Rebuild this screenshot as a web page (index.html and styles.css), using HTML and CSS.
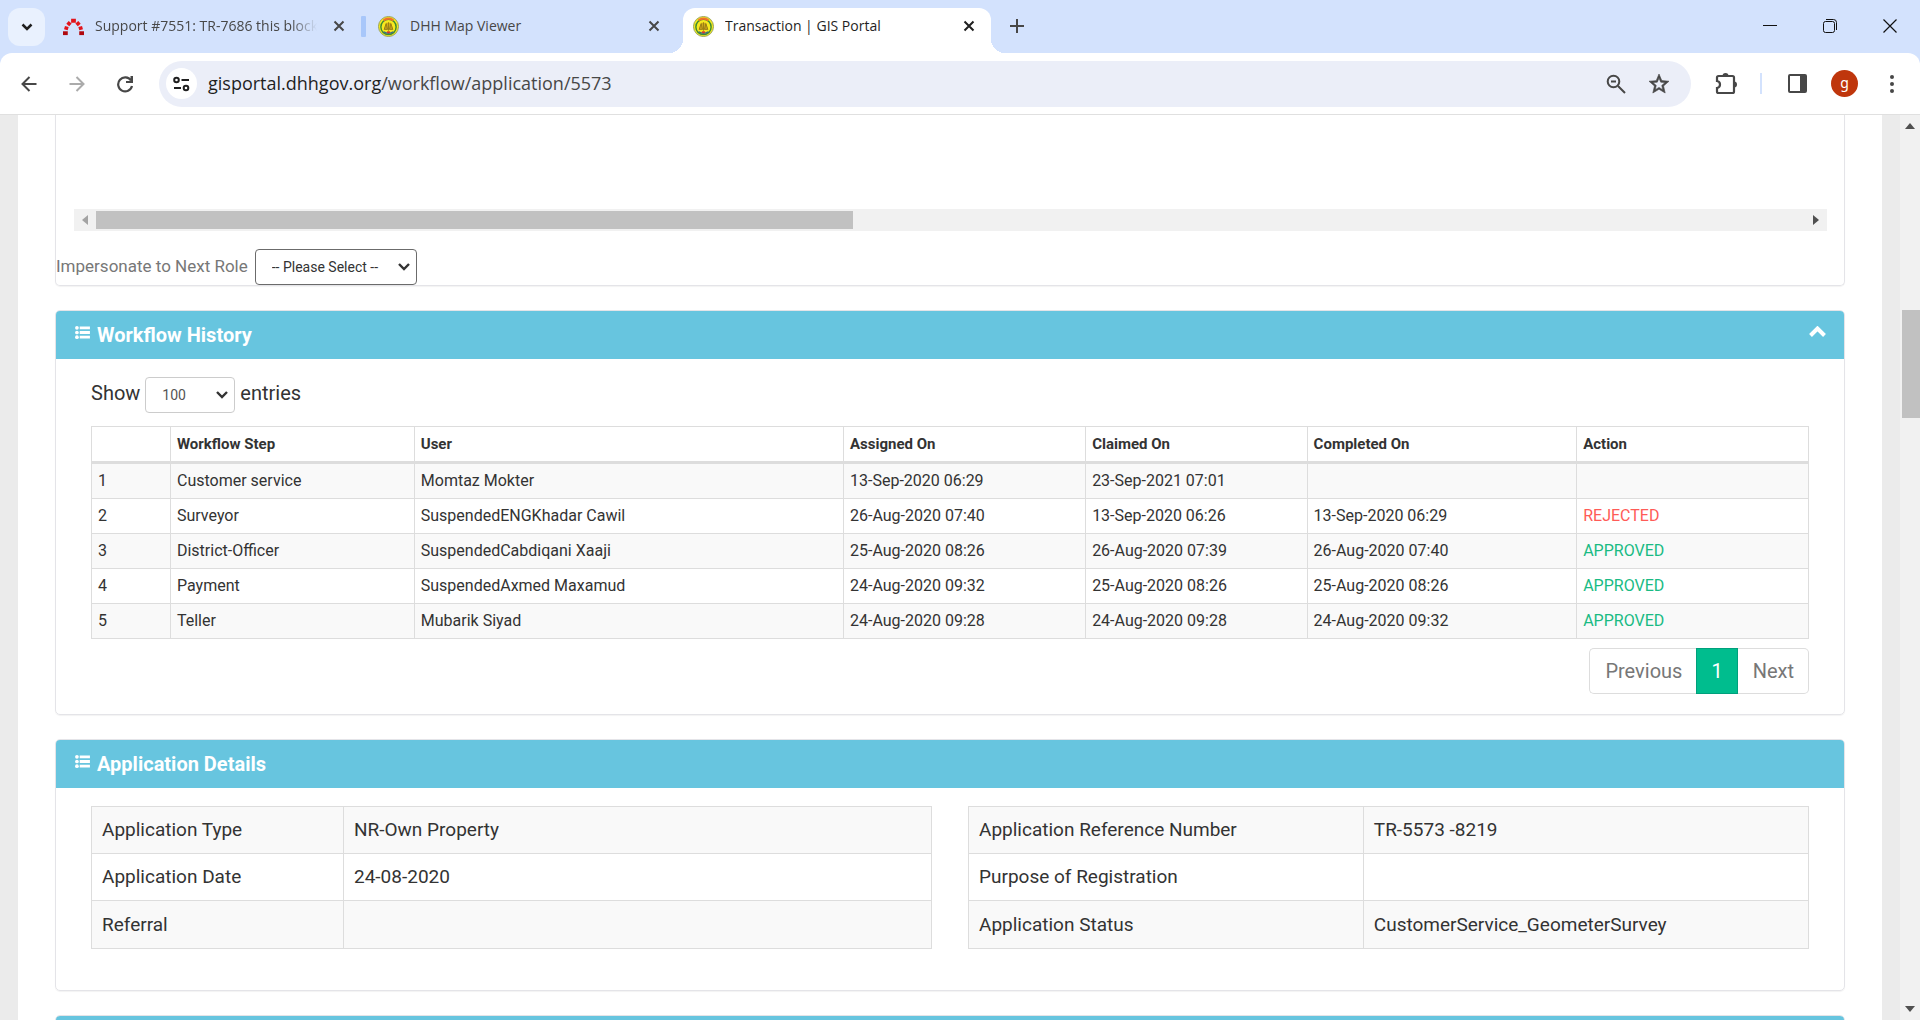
FILE: index.html
```html
<!DOCTYPE html>
<html lang="en">
<head>
  <meta charset="UTF-8">
  <meta name="viewport" content="width=device-width, initial-scale=1.0">
  <title>Transaction | GIS Portal</title>
  <link rel="stylesheet" href="styles.css">
</head>
<body>
  <!-- shared icons -->
  <svg class="sprite" aria-hidden="true">
    <symbol id="i-close" viewBox="0 0 12 12"><path d="M1.5 1.5l9 9M10.5 1.5l-9 9" fill="none" stroke="currentColor" stroke-width="2"/></symbol>
    <symbol id="i-list" viewBox="0 0 16 14"><circle cx="2" cy="2" r="2"/><circle cx="2" cy="7" r="2"/><circle cx="2" cy="12" r="2"/><path d="M5 0.5h11v3H5zM5 5.5h11v3H5zM5 10.5h11v3H5z"/></symbol>
    <symbol id="i-emblem" viewBox="0 0 22 22">
      <circle cx="11" cy="11" r="10.5" fill="#f5ec1c" stroke="#98a05a"/>
      <circle cx="11" cy="11.5" r="8" fill="#f7e81e" stroke="#3d8a34" stroke-width="1.5"/>
      <path d="M6 4.500q5-3.500 10 0" fill="none" stroke="#f0702c" stroke-width="2.500"/>
      <path d="M8.500 7h5l2.500 7.500H6z" fill="#d0ac1a"/>
      <path d="M11 6.500v9M8.500 8L6.500 14h3.500zM13.500 8L12 14h3.500z" fill="#c8a01c" stroke="#8a7214" stroke-width=".8"/>
      <path d="M6 16.500q5 3 10 0" fill="none" stroke="#3a6a8c" stroke-width="1.500"/>
      <path d="M9.500 17h3" stroke="#d43a2a" stroke-width="2"/>
    </symbol>
  </svg>

  <header class="browser">
    <div class="tabstrip">
      <button class="tab-search" aria-label="Search tabs"><svg width="12" height="8" viewBox="0 0 12 8"><path d="M1.500 1.500L6 6l4.500-4.500" fill="none" stroke="#1f1f1f" stroke-width="2.500"/></svg></button>
      <div class="tab">
        <svg class="favicon" viewBox="0 0 22 22"><path d="M2.500 20v-4" stroke="#b0080e" stroke-width="5"/><path d="M19.500 20v-4" stroke="#b0080e" stroke-width="5"/><path d="M3 14.500l1-3.500M5 9.500l2.500-3M8.500 5h5M14.500 6.500L17 9.500M18 11l1 3.500" fill="none" stroke="#e2141c" stroke-width="4"/></svg>
        <span class="tab-title faded">Support #7551: TR-7686 this block</span>
        <button class="tab-close" aria-label="Close tab"><svg width="12" height="12"><use href="#i-close"/></svg></button>
      </div>
      <span class="tab-divider"></span>
      <div class="tab">
        <svg class="favicon"><use href="#i-emblem"/></svg>
        <span class="tab-title">DHH Map Viewer</span>
        <button class="tab-close" aria-label="Close tab"><svg width="12" height="12"><use href="#i-close"/></svg></button>
      </div>
      <div class="tab active">
        <svg class="favicon"><use href="#i-emblem"/></svg>
        <span class="tab-title">Transaction | GIS Portal</span>
        <button class="tab-close" aria-label="Close tab"><svg width="12" height="12"><use href="#i-close"/></svg></button>
      </div>
      <button class="new-tab" aria-label="New tab"><svg width="14" height="14" viewBox="0 0 14 14"><path d="M7 0v14M0 7h14" stroke="#474747" stroke-width="2"/></svg></button>
      <div class="window-buttons">
        <button aria-label="Minimize"><svg width="14" height="14" viewBox="0 0 14 14"><path d="M0 6.500h14" stroke="#111"/></svg></button>
        <button aria-label="Restore"><svg width="14" height="14" viewBox="0 0 14 14"><rect x="0.500" y="2.500" width="11" height="11" rx="2" fill="none" stroke="#111"/><path d="M3 .5h7.500a3 3 0 0 1 3 3V11" fill="none" stroke="#111"/></svg></button>
        <button aria-label="Close"><svg width="14" height="14" viewBox="0 0 14 14"><path d="M.5.5l13 13M13.500.5l-13 13" stroke="#111" stroke-width="1.200"/></svg></button>
      </div>
    </div>

    <div class="toolbar">
      <button class="nav-btn" aria-label="Back"><svg width="16" height="16" viewBox="0 0 16 16"><path d="M15.500 8H2M8.500 1L1.500 8l7 7" fill="none" stroke="#474747" stroke-width="2"/></svg></button>
      <button class="nav-btn" aria-label="Forward"><svg width="16" height="16" viewBox="0 0 16 16"><path d="M.5 8H14M7.500 1l7 7-7 7" fill="none" stroke="#ababab" stroke-width="2"/></svg></button>
      <button class="nav-btn" aria-label="Reload"><svg width="18" height="18" viewBox="0 0 18 18"><path d="M15 5.500A7 7 0 1 0 16 11" fill="none" stroke="#474747" stroke-width="2.200"/><path d="M17 1v7h-7V6h4.500V1z" fill="#474747"/></svg></button>
      <div class="omnibox">
        <button class="site-info" aria-label="View site information"><svg width="17" height="16" viewBox="0 0 17 16"><g fill="none" stroke="#1f1f1f" stroke-width="2"><circle cx="3.500" cy="4" r="2.300"/><path d="M8.500 4H16M1 12h7"/><circle cx="13" cy="12" r="2.300"/></g></svg></button>
        <span class="url">gisportal.dhhgov.org<span class="url-path">/workflow/application/5573</span></span>
        <button class="omni-btn" aria-label="Zoom"><svg width="20" height="20" viewBox="0 0 20 20"><g fill="none" stroke="#474747" stroke-width="2"><circle cx="7.500" cy="7.500" r="5.800"/><path d="M5 7.500h5M12 12l7 7"/></g></svg></button>
        <button class="omni-btn" aria-label="Bookmark this tab"><svg width="24" height="24" viewBox="0 0 24 24"><path d="M22 9.240l-7.190-.62L12 2 9.190 8.630 2 9.240l5.460 4.730L5.820 21 12 17.270 18.180 21l-1.630-7.030L22 9.240zM12 15.400l-3.760 2.270 1-4.280-3.320-2.880 4.380-.38L12 6.100l1.710 4.040 4.380.38-3.320 2.880 1 4.280L12 15.400z" fill="#474747" stroke="#474747" stroke-width=".6"/></svg></button>
      </div>
      <button class="tool-btn" aria-label="Extensions"><svg width="23" height="23" viewBox="0 0 23 23"><path d="M2 5.500q0-1.500 1.500-1.500h14q1.500 0 1.500 1.500v14q0 1.500-1.500 1.500h-14Q2 21 2 19.500V16q3-.5 3-3.500T2 9z" fill="none" stroke="#474747" stroke-width="2.200"/><path d="M7.500 4a3 3 0 0 1 6 0zM19 9.500a3 3 0 0 1 0 6z" fill="#474747"/></svg></button>
      <span class="tool-divider"></span>
      <button class="tool-btn" aria-label="Side panel"><svg width="19" height="19" viewBox="0 0 19 19"><rect x="1" y="1" width="17" height="17" rx="1" fill="none" stroke="#474747" stroke-width="2"/><path d="M12 1h6v17h-6z" fill="#474747"/></svg></button>
      <button class="avatar" aria-label="Profile">g</button>
      <button class="menu-btn" aria-label="Menu"><svg width="4" height="20" viewBox="0 0 4 20"><g fill="#474747"><circle cx="2" cy="3" r="2"/><circle cx="2" cy="10" r="2"/><circle cx="2" cy="17" r="2"/></g></svg></button>
    </div>
  </header>

  <div class="viewport">
    <main class="page">
      <section class="panel panel-top">
        <div class="h-scroll">
          <svg class="h-arrow" width="6" height="10" viewBox="0 0 6 10"><path d="M6 0v10L0 5z" fill="#a3a3a3"/></svg>
          <span class="h-track"><span class="h-thumb"></span></span>
          <svg class="h-arrow" width="6" height="10" viewBox="0 0 6 10"><path d="M0 0v10l6-5z" fill="#505050"/></svg>
        </div>
        <div class="impersonate">
          <label for="next-role">Impersonate to Next Role</label>
          <select id="next-role" class="role-select">
            <option>-- Please Select --</option>
          </select>
        </div>
      </section>

      <section class="panel">
        <div class="panel-heading">
          <svg class="list-icon" width="15" height="13"><use href="#i-list"/></svg>
          <h4>Workflow History</h4>
          <button class="collapse" aria-label="Collapse"><svg width="17" height="11" viewBox="0 0 17 11"><path d="M1.500 9.500l7-7 7 7" fill="none" stroke="#fff" stroke-width="4"/></svg></button>
        </div>
        <div class="panel-body">
          <div class="length">
            <label for="entries">Show</label>
            <select id="entries" class="entries-select">
              <option>100</option>
            </select>
            <span>entries</span>
          </div>
          <table class="history">
            <colgroup>
              <col class="c-no"><col class="c-step"><col class="c-user"><col class="c-assigned"><col class="c-claimed"><col class="c-completed"><col class="c-action">
            </colgroup>
            <thead>
              <tr><th></th><th>Workflow Step</th><th>User</th><th>Assigned On</th><th>Claimed On</th><th>Completed On</th><th>Action</th></tr>
            </thead>
            <tbody>
              <tr><td>1</td><td>Customer service</td><td>Momtaz Mokter</td><td>13-Sep-2020 06:29</td><td>23-Sep-2021 07:01</td><td></td><td></td></tr>
              <tr><td>2</td><td>Surveyor</td><td>SuspendedENGKhadar Cawil</td><td>26-Aug-2020 07:40</td><td>13-Sep-2020 06:26</td><td>13-Sep-2020 06:29</td><td class="rejected">REJECTED</td></tr>
              <tr><td>3</td><td>District-Officer</td><td>SuspendedCabdiqani Xaaji</td><td>25-Aug-2020 08:26</td><td>26-Aug-2020 07:39</td><td>26-Aug-2020 07:40</td><td class="approved">APPROVED</td></tr>
              <tr><td>4</td><td>Payment</td><td>SuspendedAxmed Maxamud</td><td>24-Aug-2020 09:32</td><td>25-Aug-2020 08:26</td><td>25-Aug-2020 08:26</td><td class="approved">APPROVED</td></tr>
              <tr><td>5</td><td>Teller</td><td>Mubarik Siyad</td><td>24-Aug-2020 09:28</td><td>24-Aug-2020 09:28</td><td>24-Aug-2020 09:32</td><td class="approved">APPROVED</td></tr>
            </tbody>
          </table>
          <nav class="pagination">
            <a href="#">Previous</a>
            <a href="#" class="current">1</a>
            <a href="#">Next</a>
          </nav>
        </div>
      </section>

      <section class="panel">
        <div class="panel-heading">
          <svg class="list-icon" width="15" height="13"><use href="#i-list"/></svg>
          <h4>Application Details</h4>
        </div>
        <div class="panel-body details-row">
          <table class="details">
            <tr><th scope="row" class="w30">Application Type</th><td>NR-Own Property</td></tr>
            <tr><th scope="row">Application Date</th><td>24-08-2020</td></tr>
            <tr><th scope="row">Referral</th><td></td></tr>
          </table>
          <table class="details">
            <tr><th scope="row" class="w47">Application Reference Number</th><td>TR-5573 -8219</td></tr>
            <tr><th scope="row">Purpose of Registration</th><td></td></tr>
            <tr><th scope="row">Application Status</th><td>CustomerService_GeometerSurvey</td></tr>
          </table>
        </div>
      </section>

      <section class="panel">
        <div class="panel-heading"></div>
      </section>
    </main>

    <div class="v-scroll">
      <svg width="10" height="6" viewBox="0 0 10 6"><path d="M0 6h10L5 0z" fill="#505050"/></svg>
      <span class="v-track"><span class="v-thumb"></span></span>
      <svg width="10" height="6" viewBox="0 0 10 6"><path d="M0 0h10L5 6z" fill="#505050"/></svg>
    </div>
  </div>
</body>
</html>
```
FILE: styles.css
```css
* {
  box-sizing: border-box;
}
body {
  margin: 0;
  height: 100vh;
  display: flex;
  flex-direction: column;
  overflow: hidden;
  font-family: Roboto, sans-serif;
  color: #333;
  background: #ebebeb;
}
button {
  display: flex;
  align-items: center;
  justify-content: center;
  flex: none;
  padding: 0;
  border: none;
  background: none;
  cursor: pointer;
}
svg {
  display: block;
  flex: none;
}
.sprite {
  position: absolute;
  width: 0;
  height: 0;
}

/* browser frame */
.browser {
  flex: none;
  font-family: "Open Sans", sans-serif;
  background: #d3e2fd;
}
.tabstrip {
  display: flex;
  align-items: flex-start;
  height: 53px;
  padding: 8px 0 0 8px;
}
.tab-search {
  width: 37px;
  height: 38px;
  margin-right: 8px;
  border-radius: 12px;
  background: #e9f1fe;
}
.tab {
  display: flex;
  align-items: center;
  width: 308px;
  height: 45px;
  padding: 0 14px 9px 10px;
  color: #474747;
}
.tab .favicon {
  width: 21px;
  height: 21px;
  margin-right: 11px;
}
.tab-title {
  flex: 1;
  overflow: hidden;
  white-space: nowrap;
  font-size: 14px;
  line-height: 36px;
}
.faded {
  mask-image: linear-gradient(to right, #000 88%, transparent);
}
.tab-close {
  width: 16px;
  height: 16px;
  margin-left: 14px;
  color: #474747;
}
.tab-divider {
  width: 5px;
  height: 21px;
  margin-top: 8px;
  margin-right: 2px;
  border-radius: 1px;
  background: #a8c7fa;
}
.tab.active {
  position: relative;
  margin-left: 7px;
  border-radius: 12px 12px 0 0;
  background: #fff;
  color: #1f1f1f;
}
.tab.active .tab-close {
  color: #1f1f1f;
}
/* flared feet of the open tab */
.tab.active::before,
.tab.active::after {
  content: "";
  position: absolute;
  bottom: 0;
  width: 14px;
  height: 14px;
}
.tab.active::before {
  right: 100%;
  background: radial-gradient(circle at 0 0, transparent 14px, #fff 14px);
}
.tab.active::after {
  left: 100%;
  background: radial-gradient(circle at 100% 0, transparent 14px, #fff 14px);
}
.new-tab {
  width: 36px;
  height: 36px;
  margin-left: 8px;
}
.window-buttons {
  display: flex;
  margin-left: auto;
}
.window-buttons button {
  width: 60px;
  height: 36px;
}
.toolbar {
  display: flex;
  align-items: center;
  height: 62px;
  padding: 0 20px 0 9px;
  border-bottom: 1px solid #e0e0e0;
  border-radius: 12px 12px 0 0;
  background: #fff;
}
.nav-btn {
  width: 40px;
  height: 40px;
  margin-right: 8px;
}
.omnibox {
  flex: 1;
  display: flex;
  align-items: center;
  height: 46px;
  margin-left: 6px;
  padding: 0 11px 0 7px;
  border-radius: 23px;
  background: #ebeef8;
}
.site-info {
  width: 31px;
  height: 31px;
  border-radius: 50%;
  background: #fff;
}
.url {
  flex: 1;
  margin-left: 11px;
  padding-bottom: 2px;
  font-size: 18px;
  color: #1f1f1f;
}
.url-path {
  color: #474747;
}
.omni-btn {
  width: 43px;
  height: 40px;
}
.tool-btn {
  width: 43px;
  height: 40px;
  margin-left: 14px;
}
.tool-divider {
  width: 2px;
  height: 21px;
  margin-left: 12px;
  background: #d3e2fd;
}
.avatar {
  width: 27px;
  height: 27px;
  margin-left: 12px;
  padding-bottom: 2px;
  border-radius: 50%;
  background: #bf360c;
  color: #fff;
  font-family: "Noto Sans", sans-serif;
  font-size: 14px;
  line-height: 20px;
}
.menu-btn {
  width: 16px;
  height: 40px;
  margin-left: 26px;
}

/* page */
.viewport {
  flex: 1;
  display: flex;
  min-height: 0;
}
.page {
  flex: 1;
  margin: 0 18px;
  padding: 0 37px;
  overflow: hidden;
  background: #fff;
}
.panel {
  margin-bottom: 24px;
  border: 1px solid #e4e4e8;
  border-radius: 5px;
  box-shadow: 0 1px 1px rgba(0, 0, 0, 0.05);
}
.panel-top {
  padding-top: 94px;
  border-top: none;
  border-radius: 0 0 5px 5px;
}
.h-scroll {
  display: flex;
  align-items: center;
  height: 22px;
  margin: 0 17px 0 18px;
  background: #f1f1f1;
}
.h-arrow {
  margin: 0 8px;
}
.h-track {
  flex: 1;
}
.h-thumb {
  display: block;
  width: 44.3%;
  height: 18px;
  background: #c1c1c1;
}
.impersonate {
  display: flex;
  gap: 7px;
  margin-top: 18px;
  font-size: 17px;
  line-height: 34px;
  color: #777;
}
select {
  appearance: none;
  height: 36px;
  border-radius: 4px;
  font-family: Roboto, sans-serif;
  font-size: 14px;
  background: #fff url("data:image/svg+xml,%3Csvg xmlns='http://www.w3.org/2000/svg' width='12' height='8'%3E%3Cpath d='M1 1l5 5 5-5' fill='none' stroke='%23333' stroke-width='2.400'/%3E%3C/svg%3E") no-repeat right 6px center;
}
.role-select {
  width: 162px;
  padding: 0 16px;
  border: 1px solid #6b6b6b;
  color: #333;
}
.entries-select {
  width: 90px;
  padding: 0 16px;
  border: 1px solid #ccc;
  color: #555;
}
.panel-heading {
  display: flex;
  align-items: center;
  height: 48px;
  padding: 0 18px 0 19px;
  border-radius: 4px 4px 0 0;
  background: #67c5df;
  color: #fff;
}
.panel-heading h4 {
  flex: 1;
  margin: 0;
  font-size: 20px;
  font-weight: 700;
  line-height: 24px;
}
.list-icon {
  margin: 0 7px 6px 0;
  fill: #fff;
}
.collapse {
  margin-bottom: 8px;
}
.panel-body {
  padding: 18px 35px 20px;
}
.length {
  display: flex;
  gap: 5px;
  margin-bottom: 13px;
  font-size: 20px;
  line-height: 32px;
}
table {
  width: 100%;
  border-collapse: collapse;
}
th,
td {
  border: 1px solid #ddd;
  text-align: left;
}
.history {
  table-layout: fixed;
  font-size: 16px;
  line-height: 20px;
}
.history th,
.history td {
  height: 35px;
  padding: 0 6px;
}
.history th {
  height: 36px;
  border-bottom: 3px solid #ddd;
  font-size: 15px;
  font-weight: 700;
}
.history tbody tr:first-child td {
  height: 36px;
}
.history tbody tr:nth-child(odd),
.details tr:nth-child(odd) {
  background: #f9f9f9;
}
.c-no { width: 4.6%; }
.c-step { width: 14.2%; }
.c-user { width: 25%; }
.c-assigned { width: 14.1%; }
.c-claimed { width: 12.9%; }
.c-completed { width: 15.7%; }
.c-action { width: 13.5%; }
.history .rejected {
  color: #ff5b57;
}
.history .approved {
  color: #1abb84;
}
.pagination {
  display: flex;
  justify-content: flex-end;
  margin-top: 9px;
}
.pagination a {
  padding: 0 15px;
  border: 1px solid #ddd;
  border-left: none;
  background: #fff;
  color: #777;
  font-size: 20px;
  line-height: 44px;
  text-decoration: none;
}
.pagination a:first-child {
  padding-right: 14px;
  border-left: 1px solid #ddd;
  border-right: none;
  border-radius: 5px 0 0 5px;
}
.pagination a:last-child {
  padding-right: 14px;
  border-radius: 0 5px 5px 0;
}
.pagination .current {
  padding: 0 14px;
  border: 1px solid #00a07c;
  background: #00bd8e;
  color: #fff;
}
.details-row {
  display: flex;
  align-items: flex-start;
  gap: 36px;
  padding-bottom: 41px;
}
.details {
  flex: 1;
  table-layout: fixed;
  font-size: 19px;
  line-height: 24px;
}
.details th,
.details td {
  height: 47px;
  padding: 0 10px;
  font-weight: 400;
}
.details tr:last-child td {
  height: 48px;
}
.details .w30 {
  width: 30%;
}
.details .w47 {
  width: 47%;
}

/* page scrollbar */
.v-scroll {
  display: flex;
  flex-direction: column;
  align-items: center;
  width: 20px;
  padding: 8px 0;
  background: #f1f1f1;
}
.v-track {
  flex: 1;
  align-self: stretch;
  padding: 181px 0 0 2px;
}
.v-thumb {
  display: block;
  height: 108px;
  background: #c1c1c1;
}
```
